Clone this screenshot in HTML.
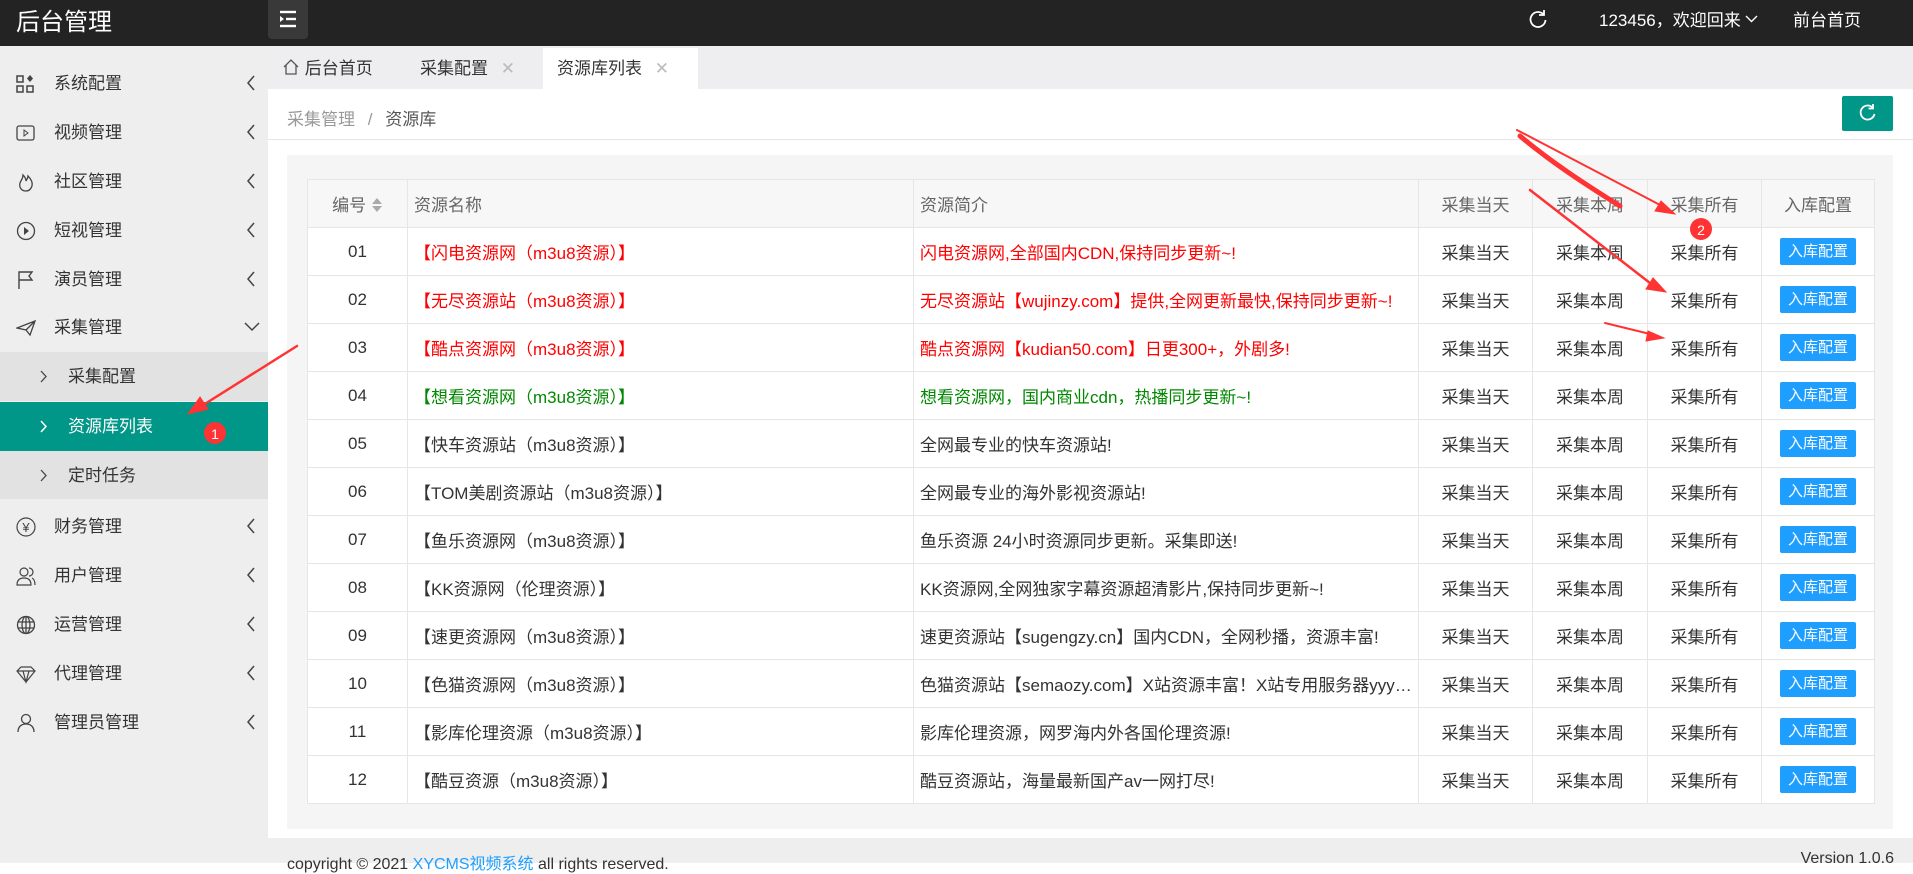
<!DOCTYPE html>
<html><head><meta charset="utf-8"><style>
*{margin:0;padding:0;box-sizing:border-box}
body{width:1913px;height:863px;overflow:hidden;font-family:"Liberation Sans","Noto Sans CJK SC",sans-serif;font-size:17px;color:#333;background:#fff;position:relative}
.hd{position:absolute;left:0;top:0;width:1913px;height:46px;background:#232323;color:#fff}
.logo{position:absolute;left:16px;top:2px;font-size:24px}
.tog{position:absolute;left:268px;top:0;width:40px;height:39px;background:#393939;border-radius:0 0 4px 4px}
.hr{position:absolute;top:6px;font-size:17px}
.sb{position:absolute;left:0;top:46px;width:268px;height:817px;background:#eee}
.it{position:absolute;left:0;width:268px;height:49px;line-height:49px}
.it .ic{position:absolute;left:16px;top:15px;width:20px;height:20px}
.it .t{position:absolute;left:54px}
.it .ar{position:absolute;right:12px;top:16px;width:10px;height:16px}
.sub{background:#e2e2e2}
.sub .t{left:68px}
.sub .ch{position:absolute;left:40px;top:18px;width:8px;height:13px}
.act{background:#009688;color:#fff}
.tabs{position:absolute;left:268px;top:46px;width:1645px;height:43px;background:#eeeef0}
.tab{position:absolute;top:2px;height:41px;line-height:41px;font-size:17px;color:#333}
.bc{position:absolute;left:268px;top:89px;width:1645px;height:51px;border-bottom:1px solid #e6e6e6;background:#fff}
.card{position:absolute;left:287px;top:155px;width:1606px;height:674px;background:#f5f5f5}
table{position:absolute;left:307px;top:179px;width:1567px;border-collapse:collapse;background:#fff;table-layout:fixed}
td,th{border:1px solid #e6e6e6;height:48px;font-weight:normal;white-space:nowrap;overflow:hidden;text-overflow:ellipsis;font-size:17px}
th{background:#f7f7f7;color:#666}
td.c,th.c{text-align:center}
td.l,th.l{text-align:left;padding-left:6px;padding-right:6px}
.r{color:#f00}.g{color:#080}
.btn{display:inline-block;background:#1e9fff;color:#fff;width:76px;height:27px;line-height:27px;border-radius:2px;font-size:15px;text-align:center;vertical-align:middle}
.ft{position:absolute;left:268px;top:838px;width:1645px;height:25px;background:#eee;color:#333;font-size:16px}
</style></head><body>
<div class="hd">
<div class="logo">后台管理</div>
<div class="tog"><svg width="40" height="39"><g stroke="#fff" stroke-width="2.4"><line x1="12" y1="12" x2="28" y2="12"/><line x1="18" y1="19" x2="28" y2="19"/><line x1="12" y1="26" x2="28" y2="26"/></g><path d="M12 16l4 3-4 3z" fill="#fff"/></svg></div>
<svg style="position:absolute;left:1528px;top:8px" width="20" height="22" viewBox="0 0 20 22"><path d="M16 7A7.5 7.5 0 1 0 17.5 12" fill="none" stroke="#fff" stroke-width="1.8"/><path d="M16 2v5h-5" fill="none" stroke="#fff" stroke-width="1.8"/></svg>
<div class="hr" style="left:1599px">123456，欢迎回来 <svg width="13" height="8" viewBox="0 0 13 8" style="vertical-align:3px"><path d="M1 1l5.5 5.5L12 1" fill="none" stroke="#fff" stroke-width="1.4"/></svg></div>
<div class="hr" style="left:1793px">前台首页</div>
</div>
<div class="sb">
<div class="it" style="top:13px"><svg class="ic" viewBox="0 0 20 20"><g fill="none" stroke="#444" stroke-width="1.5"><rect x="1" y="2" width="6" height="6"/><rect x="1" y="12" width="6" height="6"/><rect x="11" y="12" width="6" height="6"/></g><path d="M14 1l3 3.5-3 3.5-3-3.5z" fill="#444"/></svg><span class="t">系统配置</span><svg class="ar" viewBox="0 0 10 16"><path d="M8 1L2 8l6 7" fill="none" stroke="#444" stroke-width="1.5"/></svg></div>
<div class="it" style="top:62px"><svg class="ic" viewBox="0 0 20 20"><rect x="1" y="3" width="17" height="14" rx="2" fill="none" stroke="#444" stroke-width="1.3"/><path d="M8 7l4 3-4 3z" fill="none" stroke="#444"/></svg><span class="t">视频管理</span><svg class="ar" viewBox="0 0 10 16"><path d="M8 1L2 8l6 7" fill="none" stroke="#444" stroke-width="1.5"/></svg></div>
<div class="it" style="top:111px"><svg class="ic" viewBox="0 0 20 20"><path d="M10 19c-5 0-7-4-6-8 1-3 3-4 3-8 2 2 3 4 3 6 1-2 2-3 2-5 3 3 5 6 4 10-1 3-3 5-6 5z" fill="none" stroke="#444" stroke-width="1.3"/></svg><span class="t">社区管理</span><svg class="ar" viewBox="0 0 10 16"><path d="M8 1L2 8l6 7" fill="none" stroke="#444" stroke-width="1.5"/></svg></div>
<div class="it" style="top:160px"><svg class="ic" viewBox="0 0 20 20"><circle cx="10" cy="10" r="8.5" fill="none" stroke="#444" stroke-width="1.3"/><path d="M8 6l5 4-5 4z" fill="#444"/></svg><span class="t">短视管理</span><svg class="ar" viewBox="0 0 10 16"><path d="M8 1L2 8l6 7" fill="none" stroke="#444" stroke-width="1.5"/></svg></div>
<div class="it" style="top:209px"><svg class="ic" viewBox="0 0 20 20"><path d="M3 19V2h13l-3 4 3 4H3" fill="none" stroke="#444" stroke-width="1.4"/></svg><span class="t">演员管理</span><svg class="ar" viewBox="0 0 10 16"><path d="M8 1L2 8l6 7" fill="none" stroke="#444" stroke-width="1.5"/></svg></div>
<div class="it" style="top:257px"><svg class="ic" viewBox="0 0 20 20"><path d="M1 10L19 3 14 17 10 12zM10 12l9-9" fill="none" stroke="#444" stroke-width="1.3"/></svg><span class="t">采集管理</span><svg style="position:absolute;right:8px;top:19px" width="16" height="10" viewBox="0 0 16 10"><path d="M1 1l7 7 7-7" fill="none" stroke="#444" stroke-width="1.5"/></svg></div>
<div class="it sub" style="top:306px"><svg class="ch" viewBox="0 0 8 13"><path d="M1 1l5 5.5L1 12" fill="none" stroke="#444" stroke-width="1.3"/></svg><span class="t">采集配置</span></div>
<div class="it sub act" style="top:356px"><svg class="ch" viewBox="0 0 8 13"><path d="M1 1l5 5.5L1 12" fill="none" stroke="#fff" stroke-width="1.5"/></svg><span class="t">资源库列表</span></div>
<div class="it sub" style="top:405px;height:48px"><svg class="ch" viewBox="0 0 8 13"><path d="M1 1l5 5.5L1 12" fill="none" stroke="#444" stroke-width="1.3"/></svg><span class="t">定时任务</span></div>
<div class="it" style="top:456px"><svg class="ic" viewBox="0 0 20 20"><circle cx="10" cy="10" r="9" fill="none" stroke="#444" stroke-width="1.2"/><text x="10" y="15" font-size="13" text-anchor="middle" fill="#444">¥</text></svg><span class="t">财务管理</span><svg class="ar" viewBox="0 0 10 16"><path d="M8 1L2 8l6 7" fill="none" stroke="#444" stroke-width="1.5"/></svg></div>
<div class="it" style="top:505px"><svg class="ic" viewBox="0 0 20 20"><circle cx="8" cy="6" r="4" fill="none" stroke="#444" stroke-width="1.2"/><path d="M1 19c0-5 3-7 7-7s7 2 7 7zM13 2a4 4 0 0 1 0 8M16 12c2 1 3 3 3 7" fill="none" stroke="#444" stroke-width="1.2"/></svg><span class="t">用户管理</span><svg class="ar" viewBox="0 0 10 16"><path d="M8 1L2 8l6 7" fill="none" stroke="#444" stroke-width="1.5"/></svg></div>
<div class="it" style="top:554px"><svg class="ic" viewBox="0 0 20 20"><g fill="none" stroke="#444" stroke-width="1.3"><circle cx="10" cy="10" r="8.5"/><ellipse cx="10" cy="10" rx="4" ry="8.5"/><line x1="1.5" y1="7" x2="18.5" y2="7"/><line x1="1.5" y1="13" x2="18.5" y2="13"/><line x1="10" y1="1.5" x2="10" y2="18.5"/></g></svg><span class="t">运营管理</span><svg class="ar" viewBox="0 0 10 16"><path d="M8 1L2 8l6 7" fill="none" stroke="#444" stroke-width="1.5"/></svg></div>
<div class="it" style="top:603px"><svg class="ic" viewBox="0 0 20 20"><path d="M1 7l4-4h10l4 4-9 11zM1 7h18M7 7l3 11 3-11" fill="none" stroke="#444" stroke-width="1.2"/></svg><span class="t">代理管理</span><svg class="ar" viewBox="0 0 10 16"><path d="M8 1L2 8l6 7" fill="none" stroke="#444" stroke-width="1.5"/></svg></div>
<div class="it" style="top:652px"><svg class="ic" viewBox="0 0 20 20"><circle cx="10" cy="6" r="4.5" fill="none" stroke="#444" stroke-width="1.3"/><path d="M2 19c0-5 3-8 8-8s8 3 8 8" fill="none" stroke="#444" stroke-width="1.3"/></svg><span class="t">管理员管理</span><svg class="ar" viewBox="0 0 10 16"><path d="M8 1L2 8l6 7" fill="none" stroke="#444" stroke-width="1.5"/></svg></div>
</div>
<div class="tabs">
<div class="tab" style="left:14px"><svg width="18" height="18" viewBox="0 0 18 18" style="vertical-align:-2px"><path d="M2 9L9 2l7 7M4 7v9h10V7" fill="none" stroke="#555" stroke-width="1.3"/></svg> 后台首页</div>
<div class="tab" style="left:152px">采集配置 <span style="color:#bbb;margin-left:8px">✕</span></div>
<div class="tab" style="left:275px;width:155px;background:#fff;padding-left:14px">资源库列表 <span style="color:#bbb;margin-left:8px">✕</span></div>
</div>
<div class="bc">
<div style="position:absolute;left:19px;top:16px;color:#999">采集管理 <span style="margin:0 8px">/</span> <span style="color:#555">资源库</span></div>
<div style="position:absolute;left:1574px;top:7px;width:51px;height:35px;background:#009688;border-radius:2px"><svg width="51" height="35"><path d="M31 12A7 7 0 1 0 32.5 18" fill="none" stroke="#fff" stroke-width="1.8"/><path d="M31 8v4.5h-4.5" fill="none" stroke="#fff" stroke-width="1.8"/></svg></div>
</div>
<div class="card"></div>
<table>
<colgroup><col style="width:100px"><col style="width:506px"><col style="width:505px"><col style="width:114px"><col style="width:115px"><col style="width:114px"><col style="width:113px"></colgroup>
<tr><th class="c">编号 <svg width="12" height="16" viewBox="0 0 12 16" style="vertical-align:-2px"><path d="M6 1l5 6H1zM6 15l5-6H1z" fill="#aaa"/></svg></th><th class="l">资源名称</th><th class="l">资源简介</th><th class="c">采集当天</th><th class="c">采集本周</th><th class="c">采集所有</th><th class="c">入库配置</th></tr>
<tr><td class="c">01</td><td class="l r">【闪电资源网（m3u8资源）】</td><td class="l r">闪电资源网,全部国内CDN,保持同步更新~!</td><td class="c">采集当天</td><td class="c">采集本周</td><td class="c">采集所有</td><td class="c"><span class="btn">入库配置</span></td></tr>
<tr><td class="c">02</td><td class="l r">【无尽资源站（m3u8资源）】</td><td class="l r">无尽资源站【wujinzy.com】提供,全网更新最快,保持同步更新~!</td><td class="c">采集当天</td><td class="c">采集本周</td><td class="c">采集所有</td><td class="c"><span class="btn">入库配置</span></td></tr>
<tr><td class="c">03</td><td class="l r">【酷点资源网（m3u8资源）】</td><td class="l r">酷点资源网【kudian50.com】日更300+，外剧多!</td><td class="c">采集当天</td><td class="c">采集本周</td><td class="c">采集所有</td><td class="c"><span class="btn">入库配置</span></td></tr>
<tr><td class="c">04</td><td class="l g">【想看资源网（m3u8资源）】</td><td class="l g">想看资源网，国内商业cdn，热播同步更新~!</td><td class="c">采集当天</td><td class="c">采集本周</td><td class="c">采集所有</td><td class="c"><span class="btn">入库配置</span></td></tr>
<tr><td class="c">05</td><td class="l">【快车资源站（m3u8资源）】</td><td class="l">全网最专业的快车资源站!</td><td class="c">采集当天</td><td class="c">采集本周</td><td class="c">采集所有</td><td class="c"><span class="btn">入库配置</span></td></tr>
<tr><td class="c">06</td><td class="l">【TOM美剧资源站（m3u8资源）】</td><td class="l">全网最专业的海外影视资源站!</td><td class="c">采集当天</td><td class="c">采集本周</td><td class="c">采集所有</td><td class="c"><span class="btn">入库配置</span></td></tr>
<tr><td class="c">07</td><td class="l">【鱼乐资源网（m3u8资源）】</td><td class="l">鱼乐资源 24小时资源同步更新。采集即送!</td><td class="c">采集当天</td><td class="c">采集本周</td><td class="c">采集所有</td><td class="c"><span class="btn">入库配置</span></td></tr>
<tr><td class="c">08</td><td class="l">【KK资源网（伦理资源）】</td><td class="l">KK资源网,全网独家字幕资源超清影片,保持同步更新~!</td><td class="c">采集当天</td><td class="c">采集本周</td><td class="c">采集所有</td><td class="c"><span class="btn">入库配置</span></td></tr>
<tr><td class="c">09</td><td class="l">【速更资源网（m3u8资源）】</td><td class="l">速更资源站【sugengzy.cn】国内CDN，全网秒播，资源丰富!</td><td class="c">采集当天</td><td class="c">采集本周</td><td class="c">采集所有</td><td class="c"><span class="btn">入库配置</span></td></tr>
<tr><td class="c">10</td><td class="l">【色猫资源网（m3u8资源）】</td><td class="l">色猫资源站【semaozy.com】X站资源丰富！X站专用服务器yyyyyyyy</td><td class="c">采集当天</td><td class="c">采集本周</td><td class="c">采集所有</td><td class="c"><span class="btn">入库配置</span></td></tr>
<tr><td class="c">11</td><td class="l">【影库伦理资源（m3u8资源）】</td><td class="l">影库伦理资源，网罗海内外各国伦理资源!</td><td class="c">采集当天</td><td class="c">采集本周</td><td class="c">采集所有</td><td class="c"><span class="btn">入库配置</span></td></tr>
<tr><td class="c">12</td><td class="l">【酷豆资源（m3u8资源）】</td><td class="l">酷豆资源站，海量最新国产av一网打尽!</td><td class="c">采集当天</td><td class="c">采集本周</td><td class="c">采集所有</td><td class="c"><span class="btn">入库配置</span></td></tr>
</table>
<div class="ft"><div style="position:absolute;left:19px;top:12px">copyright © 2021 <span style="color:#1e9fff">XYCMS视频系统</span> all rights reserved.</div><div style="position:absolute;right:19px;top:12px">Version 1.0.6</div></div>
<svg style="position:absolute;left:0;top:0" width="1913" height="863">
<g stroke="#f33" fill="#f33" stroke-linecap="round">
<line x1="297" y1="346" x2="200" y2="407" stroke-width="2.5"/><path d="M188 414l12-17 8 12z"/>
<line x1="1517" y1="130" x2="1660" y2="205" stroke-width="2"/><path d="M1675 214l-20-3 6-10z"/>
<path d="M1520 136c30 25 60 45 100 70" stroke-width="5" fill="none"/>
<line x1="1530" y1="190" x2="1650" y2="283" stroke-width="2.5"/><path d="M1666 292l-20-3 7-11z"/>
<line x1="1605" y1="323" x2="1650" y2="334" stroke-width="2"/><path d="M1664 338l-18 3 2-10z"/>
</g>
<circle cx="215" cy="433" r="11" fill="#f33"/><text x="215" y="439" fill="#fff" font-size="14" text-anchor="middle" font-family="Liberation Sans">1</text>
<circle cx="1701" cy="229" r="11" fill="#f33"/><text x="1701" y="235" fill="#fff" font-size="14" text-anchor="middle" font-family="Liberation Sans">2</text>
</svg>
</body></html>
